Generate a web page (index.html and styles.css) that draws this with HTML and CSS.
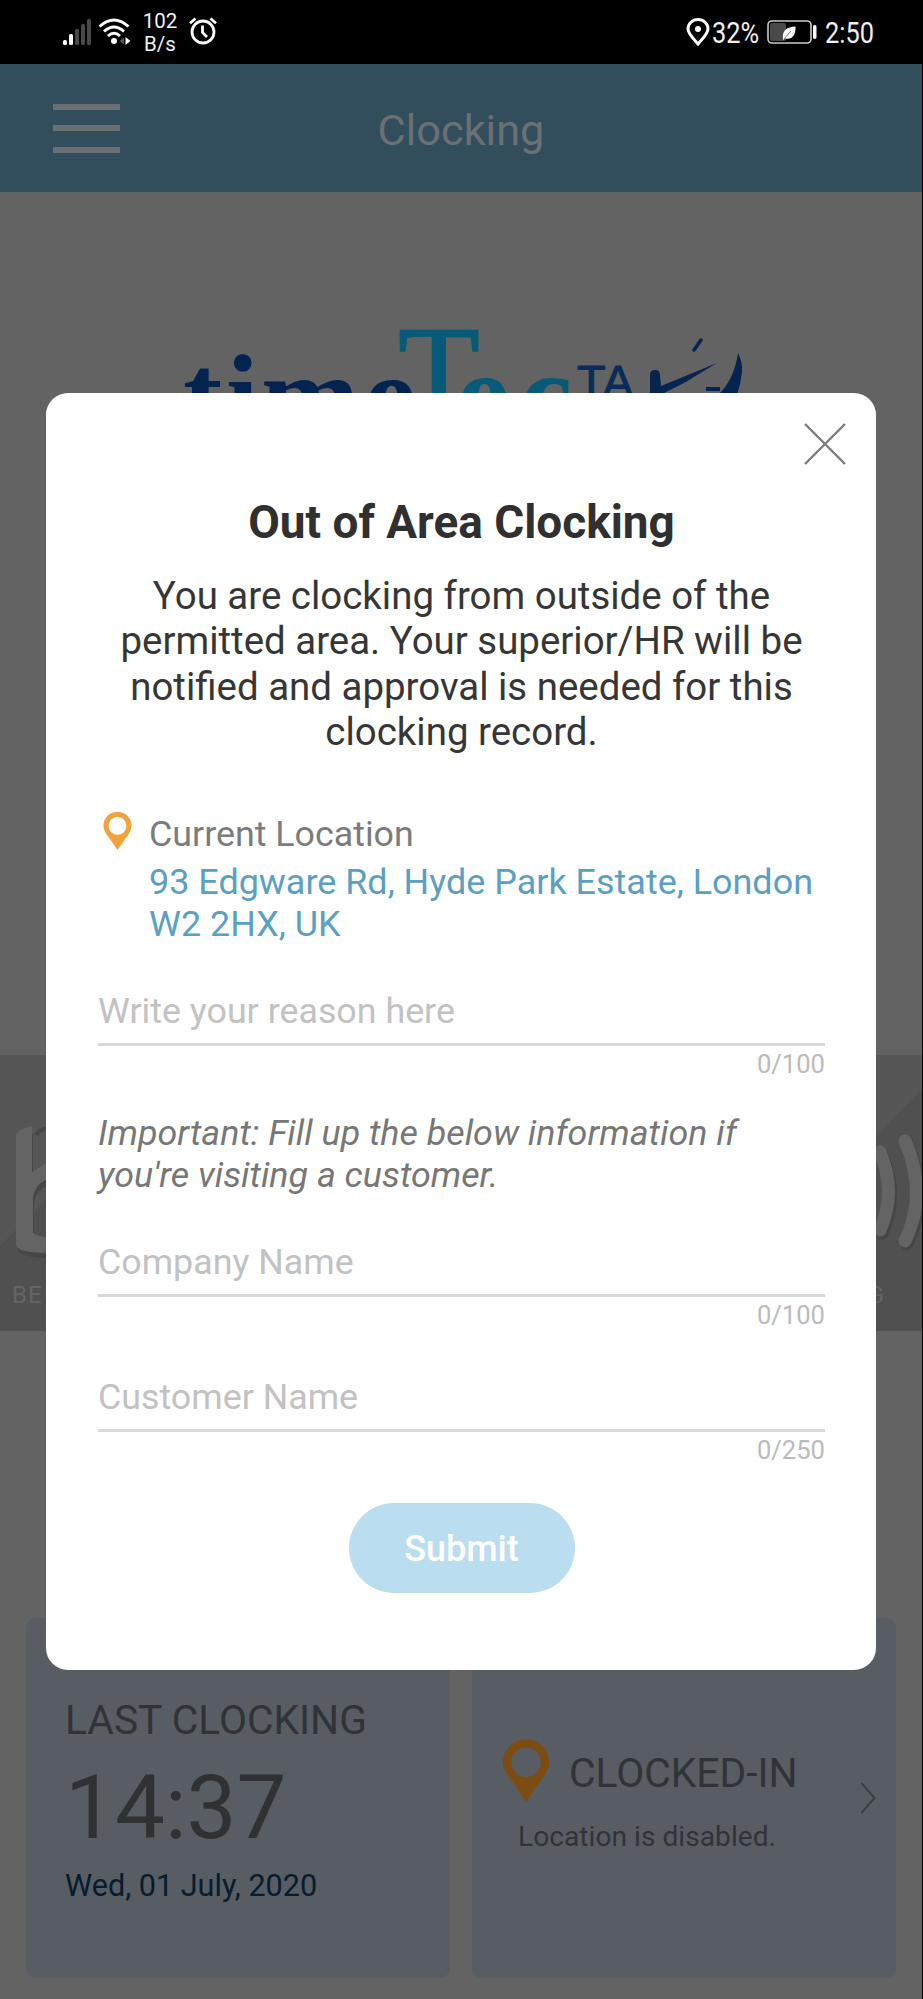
FILE: index.html
```html
<!DOCTYPE html>
<html lang="en">
<head>
<meta charset="utf-8">
<title>Clocking</title>
<link rel="stylesheet" href="styles.css">
</head>
<body>
<div class="screen">
  <header class="status">
    <div class="status-left">
      <svg class="signal" width="28" height="28" viewBox="0 0 28 28">
        <g fill="#fff"><rect x="0" y="21" width="4" height="5" rx="1.5"/><rect x="6" y="15" width="4" height="11" rx="1.5"/></g>
        <g fill="#484848"><rect x="12" y="10" width="4" height="16" rx="1.5"/><rect x="18" y="5" width="4" height="21" rx="1.5"/><rect x="24" y="0" width="4" height="26" rx="1.5"/></g>
      </svg>
      <svg class="wifi" width="34" height="28" viewBox="0 0 34 28">
        <g fill="none" stroke="#fff" stroke-width="3"><path d="M1.500 8.500Q16 -4.500 30.500 8.500"/><path d="M6 13.500Q16 4.500 26 13.500"/><path d="M10 18Q16 12.500 22 18"/></g>
        <circle cx="16" cy="23" r="3" fill="#fff"/><path d="M26 19.500v7l-4.500-3.500z" fill="#555"/><path d="M27.500 19v8l5-4z" fill="#fff"/>
      </svg>
      <div class="rate"><span>102</span><span>B/s</span></div>
      <svg class="alarm" width="28" height="28" viewBox="0 0 28 28" fill="none" stroke="#fff" stroke-width="2.800">
        <circle cx="14" cy="15" r="11"/><path d="M13.500 8.500v7l4.500 4.500M1 6.200l5.500-4.700M27 6.200l-5.500-4.700"/>
      </svg>
    </div>
    <div class="status-right">
      <svg class="gps" width="24" height="28" viewBox="0 0 24 28"><path d="M12 26C8 21 2 16 2 11a10 9.500 0 0 1 20 0C22 16 16 21 12 26z" fill="none" stroke="#fff" stroke-width="3"/><circle cx="12" cy="11" r="3" fill="#fff"/></svg>
      <span class="narrow percent">32%</span>
      <svg class="battery" width="50" height="26" viewBox="0 0 50 26">
        <rect x="1" y="2" width="43" height="22" rx="4" fill="none" stroke="#ccc" stroke-width="1.600"/>
        <rect x="3" y="4" width="16" height="18" rx="2" fill="#4a4a4a"/>
        <path d="M16 20C15 11 20 8 28.500 7.500C29 16 25 21 18.500 19.500L16 21z" fill="#fff"/><path d="M17 20l7-8" stroke="#777" stroke-width="1"/>
        <rect x="46" y="6" width="3.500" height="14" rx="1.700" fill="#fff"/>
      </svg>
      <span class="narrow time">2:50</span>
    </div>
  </header>

  <nav class="appbar">
    <div class="menu"><i></i><i></i><i></i></div>
    <h1>Clocking</h1>
  </nav>

  <section class="brand">
    <svg width="922" height="110" viewBox="0 310 922 110">
      <g font-family="Liberation Serif, serif">
        <text class="navy" x="183 226 261 364" y="436" font-size="118" font-weight="700">time</text>
        <text class="teal" x="398" y="418" font-size="134" stroke="#075a78" stroke-width="1.500">T</text>
        <text class="teal" x="457 520" y="434" font-size="118" font-weight="700">ec</text>
      </g>
      <text x="577" y="398" font-size="47" class="ta" font-family="Liberation Sans, sans-serif">TA</text>
      <g fill="#052550">
        <path d="M650 375q0-5 5-5t5 5l1 11L717 363 684 383 660 395H650z"/>
        <path d="M738 353q5 10 4 19-1 11-5 23H718q16-15 20-42z"/>
        <path d="M694 350l7-10" stroke="#052550" stroke-width="3.500" stroke-linecap="round"/>
        <rect x="706" y="387" width="14" height="4"/>
      </g>
    </svg>
  </section>

  <section class="banner">
    <svg width="922" height="276" viewBox="0 0 922 276">
      <path d="M0 0H100V90L0 191z" fill="#565656"/><path d="M800 0H922V34L870 87L800 150z" fill="#565656"/>
      <g fill="none" stroke="#464646" stroke-width="13" stroke-linecap="round" transform="translate(2 3)"><path d="M905 86Q928 138 905 186"/><path d="M880 97Q897 137 880 175"/></g>
      <path d="M18 85q0-6 14-10v42l14-8v18q-13 5-13 20v31q6 4 13 4v17q-30-1-30-10z" fill="#464646" transform="translate(1 4)"/>
      <path d="M16 81q0-6 16-10v46l16-10v17q-15 6-15 22v32q6 4 15 4v16q-32 0-32-9z" fill="#646464"/>
      <path d="M36 80q4-6 12-7" stroke="#464646" stroke-width="4" fill="none"/>
      <g fill="none" stroke="#646464" stroke-width="13" stroke-linecap="round"><path d="M905 86Q928 138 905 186"/><path d="M880 97Q897 137 880 175"/></g>
    </svg>
    <div class="tagline"><span>BE</span><span>G</span></div>
  </section>

  <section class="cards">
    <article class="card last">
      <h2>LAST CLOCKING</h2>
      <div class="clock">14:37</div>
      <div class="date">Wed, 01 July, 2020</div>
    </article>
    <article class="card state">
      <div class="state-main">
        <div class="state-row">
          <svg width="48" height="64" viewBox="0 0 48 64"><path fill="#7c4c10" fill-rule="evenodd" d="M24 0.500C10.500 0.500 1 11 1 23C1 31 6 37 11 43.500L24 63L37 43.500C42 37 47 31 47 23C47 11 37.500 .5 24 .5zM24 8.500a14.800 14.800 0 1 1 0 29.600a14.800 14.800 0 1 1 0-29.600z"/></svg>
          <h2>CLOCKED-IN</h2>
        </div>
        <p>Location is disabled.</p>
      </div>
      <svg class="chevron" width="16" height="32" viewBox="0 0 16 32"><path d="M1.500 1L14.500 16L1.500 31" fill="none" stroke="#3c3f43" stroke-width="2"/></svg>
    </article>
  </section>

  <div class="modal" role="dialog">
    <svg class="close" width="42" height="42" viewBox="0 0 42 42"><path d="M1 1L41 41M41 1L1 41" stroke="#7c7c7c" stroke-width="2.400"/></svg>
    <h2 class="title">Out of Area Clocking</h2>
    <p class="message">You are clocking from outside of the<br>permitted area. Your superior/HR will be<br>notified and approval is needed for this<br>clocking record.</p>
    <div class="location">
      <svg width="29" height="38" viewBox="0 0 29 38"><path fill="#f2a23a" fill-rule="evenodd" d="M14.500 0C6 0 .5 6 .5 13.500C.5 19 4 23 7 27L14.500 38L22 27C25 23 28.500 19 28.500 13.500C28.500 6 23 0 14.500 0zM14.500 4.800a9 9 0 1 1 0 18a9 9 0 1 1 0-18z"/></svg>
      <div><div class="loc-label">Current Location</div><div class="address">93 Edgware Rd, Hyde Park Estate, London<br>W2 2HX, UK</div></div>
    </div>
    <div class="field reason"><div class="input">Write your reason here</div><div class="count">0/100</div></div>
    <p class="note">Important: Fill up the below information if<br>you're visiting a customer.</p>
    <div class="field company"><div class="input">Company Name</div><div class="count">0/100</div></div>
    <div class="field customer"><div class="input">Customer Name</div><div class="count">0/250</div></div>
    <button class="submit">Submit</button>
  </div>
</div>
</body>
</html>
```
FILE: styles.css
```css
* { box-sizing: border-box; margin: 0; padding: 0; }
body { background: #000; font-family: Roboto, sans-serif; }
h1, h2 { font-weight: 400; }
svg { display: block; flex: none; }
.screen { position: relative; width: 922px; height: 1999px; background: #636363; overflow: hidden; display: flex; flex-direction: column; }

.status { height: 64px; background: #000; color: #f0f0f0; display: flex; justify-content: space-between; padding: 0 47px 0 63px; }
.status-left, .status-right { display: flex; align-items: flex-start; white-space: nowrap; }
.signal { margin-top: 19px; }
.wifi { margin: 18px 0 0 7px; }
.rate { margin: 10px 0 0 10px; width: 36px; font-size: 20.500px; line-height: 23px; text-align: center; display: flex; flex-direction: column; }
.alarm { margin: 17px 0 0 11px; }
.gps { margin-top: 18px; }
.narrow { font-size: 29.500px; line-height: 34px; margin-top: 16px; transform: scaleX(.86); transform-origin: 0 0; }
.percent { width: 54px; margin-left: 2px; }
.battery { margin: 19px 0 0 1px; }
.time { width: 50px; margin-left: 8px; }

.appbar { height: 128px; background: #324e5c; display: flex; align-items: center; }
.menu { width: 67px; margin-left: 53px; display: flex; flex-direction: column; gap: 15.500px; }
.menu i { height: 6px; background: #6b7075; }
.appbar h1 { width: 682px; text-align: center; font-size: 43.300px; line-height: 50px; padding-top: 5px; height: 55px; color: #6b7075; }

.brand { height: 863px; padding-top: 118px; }
.navy { fill: #032350; }
.teal { fill: #075a78; }
.ta { fill: #0a2c58; stroke: #0a2c58; stroke-width: 1px; }

.banner { height: 276px; background: #505050; display: grid; }
.banner > * { grid-area: 1 / 1; }
.tagline { align-self: end; display: flex; justify-content: space-between; padding: 0 37px 22px 12px; font-size: 24px; line-height: 28px; letter-spacing: 1px; color: #646464; }

.cards { margin-top: 287px; height: 360px; padding: 0 26px; display: grid; grid-template-columns: 424px 424px; gap: 22px; }
.card { background: #585d64; border-radius: 10px; color: #313337; }
.last { padding: 77px 0 0 39px; }
.card h2 { font-size: 40.750px; line-height: 50px; }
.clock { font-size: 89px; line-height: 100px; margin-top: 13px; color: #303133; }
.date { font-size: 30.600px; line-height: 36px; margin-top: 10px; color: #071c2e; }
.state { display: flex; justify-content: space-between; padding: 121px 20px 0 30px; }
.state-row { display: flex; gap: 19px; }
.state-row h2 { padding-top: 9px; }
.state p { font-size: 28.200px; line-height: 34px; margin: 17px 0 0 16px; }
.chevron { margin-top: 43px; }

.modal { position: absolute; left: 46px; top: 393px; width: 830px; height: 1277px; border-radius: 22px; background: #fff; padding: 0 51px 0 52px; display: flex; flex-direction: column; }
.close { margin: 30px -21px 0 auto; }
.title { margin-top: 32px; font-size: 45.900px; line-height: 50px; font-weight: 700; text-align: center; color: #303030; white-space: nowrap; }
.message { margin-top: 26px; font-size: 38.450px; line-height: 45.300px; text-align: center; color: #363636; white-space: nowrap; }
.location { display: flex; gap: 17px; margin: 58px 0 0 5px; white-space: nowrap; }
.loc-label { padding-top: 1px; font-size: 35.800px; line-height: 42px; color: #7c7c7c; }
.address { margin-top: 6px; font-size: 35.950px; line-height: 42px; color: #5ba0c4; }
.field { height: 90px; }
.input { height: 56px; font-size: 35.800px; line-height: 42px; border-bottom: 3px solid #d8d8d8; color: #c2c2c2; }
.count { text-align: right; font-size: 25.600px; line-height: 36px; color: #bbb; }
.reason { margin-top: 45px; }
.note { margin-top: 32px; font-size: 35.850px; line-height: 42px; font-style: italic; color: #777; white-space: nowrap; }
.company { margin-top: 45px; }
.customer { margin-top: 45px; }
.submit { margin: 37px auto 0; width: 226px; height: 90px; border: 0; border-radius: 45px; background: #badeef; color: #fff; font: 500 36px/92px Roboto, sans-serif; }
```
